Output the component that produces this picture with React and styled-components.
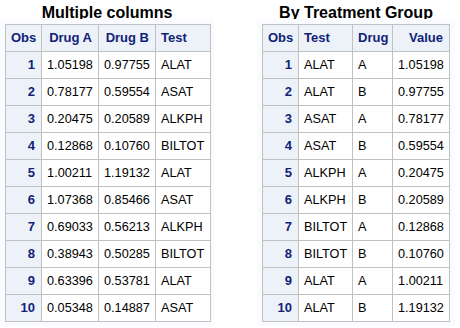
import React from "react";
import styled, { createGlobalStyle } from "styled-components";

const GlobalStyle = createGlobalStyle`
  body {
    margin: 0;
    background: #fff;
    font-family: "Liberation Sans", Arial, sans-serif;
  }
`;

const Page = styled.div`
  display: flex;
  align-items: flex-start;
  gap: 43px;
`;

const Block = styled.div`
  display: flex;
  flex-direction: column;
`;

const Title = styled.div`
  height: 19px;
  box-sizing: border-box;
  padding-top: 3px;
  line-height: 19px;
  font-size: 16px;
  font-weight: bold;
  color: #000;
  text-align: center;
  white-space: nowrap;
`;

const Panel = styled.div`
  background: #fafbfe;
  padding: 5px ${(p) => p.$right}px 4px 5px;
`;

const Table = styled.table`
  width: ${(p) => p.$w}px;
  table-layout: fixed;
  border-collapse: separate;
  border-spacing: 0;
  border-top: 1px solid #c1c1c1;
  border-left: 1px solid #c1c1c1;
  background: #fff;
`;

const Cell = styled.td`
  box-sizing: border-box;
  width: ${(p) => p.$w}px;
  padding: 5px 6px 5px 5px;
  line-height: 16px;
  border-right: 1px solid #c1c1c1;
  border-bottom: 1px solid #c1c1c1;
  text-align: ${(p) => p.$align};
  font-size: 12.7px;
  color: #000;
  white-space: nowrap;
  overflow: visible;
`;

const Head = styled(Cell).attrs({ as: "th" })`
  background: #edf2f9;
  color: #112277;
  font-size: 13px;
  font-weight: bold;
`;

const RowHead = styled(Head)`
  text-align: right;
`;

const DataTable = ({ title, columns, rows, right }) => {
  const total = 1 + 36 + columns.reduce((s, c) => s + c.w, 0);
  return (
    <Block>
      <Title>{title}</Title>
      <Panel $right={right}>
        <Table $w={total}>
          <thead>
            <tr>
              <Head $w={36} $align="center">Obs</Head>
              {columns.map((c) => (
                <Head key={c.name} $w={c.w} $align={c.align}>
                  {c.name}
                </Head>
              ))}
            </tr>
          </thead>
          <tbody>
            {rows.map((r, i) => (
              <tr key={i}>
                <RowHead as="th" $w={36}>
                  {i + 1}
                </RowHead>
                {r.map((v, j) => (
                  <Cell key={j} $w={columns[j].w} $align={columns[j].align}>
                    {v}
                  </Cell>
                ))}
              </tr>
            ))}
          </tbody>
        </Table>
      </Panel>
    </Block>
  );
};

const wide = [
  ["1.05198", "0.97755", "ALAT"],
  ["0.78177", "0.59554", "ASAT"],
  ["0.20475", "0.20589", "ALKPH"],
  ["0.12868", "0.10760", "BILTOT"],
  ["1.00211", "1.19132", "ALAT"],
  ["1.07368", "0.85466", "ASAT"],
  ["0.69033", "0.56213", "ALKPH"],
  ["0.38943", "0.50285", "BILTOT"],
  ["0.63396", "0.53781", "ALAT"],
  ["0.05348", "0.14887", "ASAT"],
];

const long = [
  ["ALAT", "A", "1.05198"],
  ["ALAT", "B", "0.97755"],
  ["ASAT", "A", "0.78177"],
  ["ASAT", "B", "0.59554"],
  ["ALKPH", "A", "0.20475"],
  ["ALKPH", "B", "0.20589"],
  ["BILTOT", "A", "0.12868"],
  ["BILTOT", "B", "0.10760"],
  ["ALAT", "A", "1.00211"],
  ["ALAT", "B", "1.19132"],
];

export default function App() {
  return (
    <>
      <GlobalStyle />
      <Page>
        <DataTable
          title="Multiple columns"
          right={3}
          columns={[
            { name: "Drug A", w: 57, align: "right" },
            { name: "Drug B", w: 57, align: "right" },
            { name: "Test", w: 55, align: "left" },
          ]}
          rows={wide}
        />
        <DataTable
          title="By Treatment Group"
          right={5}
          columns={[
            { name: "Test", w: 54, align: "left" },
            { name: "Drug", w: 40, align: "left" },
            { name: "Value", w: 57, align: "right" },
          ]}
          rows={long}
        />
      </Page>
    </>
  );
}
